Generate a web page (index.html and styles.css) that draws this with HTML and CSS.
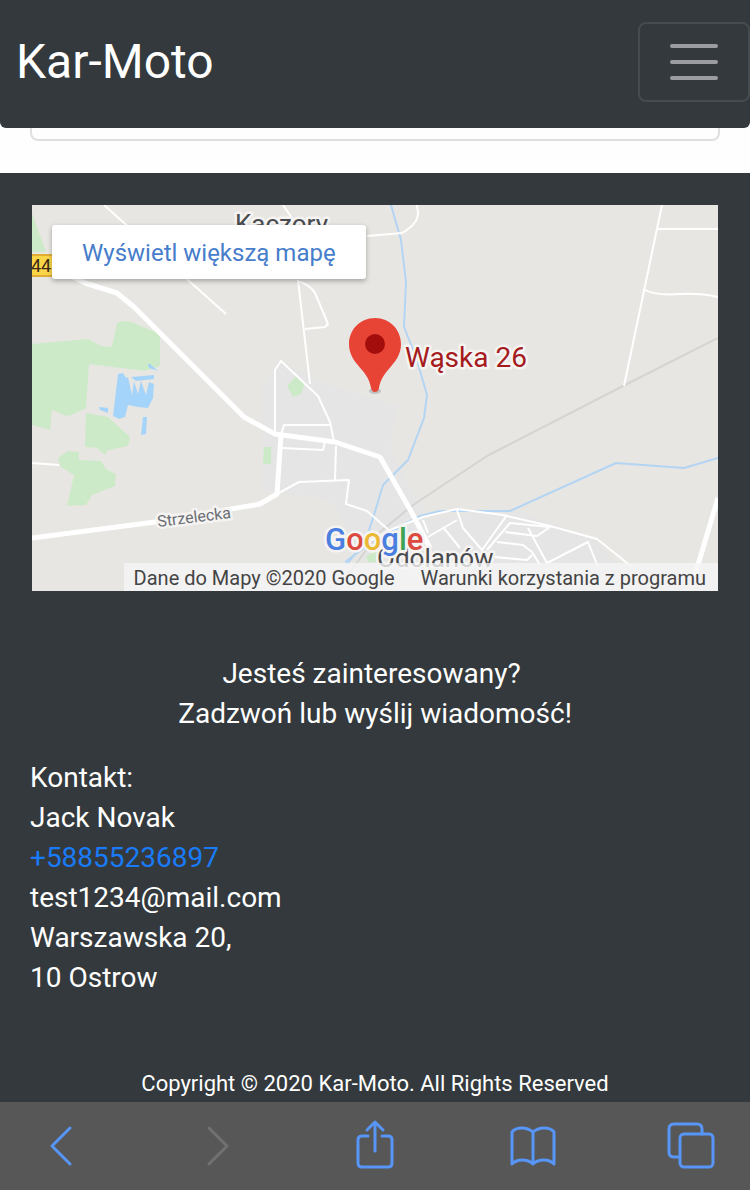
FILE: index.html
```html
<!DOCTYPE html>
<html lang="pl">
<head>
<meta charset="utf-8">
<meta name="viewport" content="width=device-width, initial-scale=1">
<title>Kar-Moto</title>
<link rel="stylesheet" href="styles.css">
</head>
<body>
<header class="navbar">
  <a class="brand" href="#">Kar-Moto</a>
  <button class="toggler" type="button" aria-label="Menu">
    <svg class="toggler-icon" viewBox="0 0 60 60" fill="none" stroke-width="4" stroke-linecap="round" aria-hidden="true"><path d="M8 14H52M8 30H52M8 46H52"/></svg>
  </button>
</header>
<main class="content">
  <div class="card"></div>
</main>
<footer class="footer">
  <section class="map" aria-label="Mapa">
    <svg class="map-canvas" viewBox="32 205 686 386" preserveAspectRatio="xMidYMid slice" aria-hidden="true">
      <rect class="land" x="32" y="205" width="686" height="386"/>
      <path class="town" d="M262 385L281 361L330 385L398 405L390 450L430 520L480 512L515 510L595 538L635 591H380L330 500L262 490Z"/>
      <g class="park">
        <path d="M32 213L46 252H32Z"/>
        <path d="M32 344L88 339L101 346L112 347L117 323Q124 319 134 323L160 334V366L145 371L89 364L86 408L71 415L66 416L52 410L50 430L32 425Z"/>
        <path d="M86 413L108 417L130 437L128 446L108 450L105 455L97 448L85 447Z"/>
        <path d="M58 458L68 451L79 452L79 460L101 461L106 469L116 474L115 486L92 495L86 505L67 506L74 475L61 467Z"/>
        <path d="M287 386L296 376L305 383L301 394L293 397Z"/>
        <path d="M264 447H271V464H263Z"/>
        <path d="M366 556L378 550L376 562H368Z"/>
      </g>
      <g class="lake">
        <path d="M118 374L123 373L126 378L128 377L132 395L134 381L138 394L141 381L146 395L149 382L154 384L153 398L148 408L138 407L128 405L125 417L119 419L113 416Z"/>
        <path d="M148 364L150 364L158 371L149 368ZM131 377L154 375L154 379L136 381ZM99 407L108 408L108 413L100 410ZM143 417H147L146 434L141 435Z"/>
      </g>
      <g class="water">
        <path d="M391 205L401 240L406 282L404 327L416 357L427 395L424 418L408 460L383 485L374 515L365 542L346 565"/>
        <path d="M345 562L375 540L420 516L440 511L510 511L616 463L684 468L718 458"/>
      </g>
      <path class="railway" d="M718 338L625 385L487 456L413 505L380 532L340 585"/>
      <g class="street">
        <path d="M104 205L226 314M283 205L300 230"/>
        <path d="M367 236L402 233Q418 224 418 213L417 205M298 280L310 384M298 281Q310 285 315 293L328 324L325 327L305 329"/>
        <path d="M275 434L275 370L281 361L318 396L330 422L334 442M281 435L284 425H331M282 448L323 450L325 442M336 446L335 480M277 494L299 482L349 480L346 504L367 511L391 532"/>
        <path d="M662 205L624 386M658 229H718M643 289Q655 296 680 294Q700 293 718 297"/>
        <path d="M32 463L59 465"/>
        <path d="M365 544L390 530L423 517L457 509L503 515L550 526L597 539L632 567"/>
        <path d="M423 520L428 533M428 537L457 520M443 527L460 548M457 510L463 528L482 550L507 515M487 550L510 523L550 527L537 536L505 532M497 542L523 545L532 552L540 565M495 557L527 560L532 555M528 528L547 563L588 542L598 567"/>
      </g>
      <g class="road">
        <path d="M52 266L85 283L117 293L134 307L244 417L275 434L335 442L380 457L412 513L430 548"/>
        <path d="M32 538L155 522L260 504L277 494L281 435M718 498L695 575"/>
      </g>
      <g class="shield"><path d="M32 254H54V277H32Z"/><path class="shield-line" d="M32 255H54M32 276H54"/></g>
      <text class="road-number" x="31" y="272">44</text>
      <text class="label label-town" x="235" y="233">Kaczory</text>
      <text class="label label-town" x="377" y="567">Odolanów</text>
      <text class="label label-street" transform="translate(158 527) rotate(-7)">Strzelecka</text>
      <ellipse class="pin-shadow" cx="375" cy="391" rx="6" ry="3"/>
      <path class="pin" d="M375 318C360 318 349 330 349 344C349 355 355 362 362 370C368 377 370 382 371 388Q372 392 375 392Q378 392 379 388C380 382 382 377 388 370C395 362 401 355 401 344C401 330 390 318 375 318Z"/>
      <circle class="pin-dot" cx="375" cy="344" r="10"/>
      <text class="label label-pin" x="405" y="367">Wąska 26</text>
      <text class="label logo" x="325" y="550"><tspan class="g-blue">G</tspan><tspan class="g-red">o</tspan><tspan class="g-yellow">o</tspan><tspan class="g-blue">g</tspan><tspan class="g-green">l</tspan><tspan class="g-red">e</tspan></text>
    </svg>
    <a class="map-link" href="#">Wyświetl większą mapę</a>
    <div class="map-legal">
      <span>Dane do Mapy ©2020 Google</span>
      <a href="#">Warunki korzystania z programu</a>
    </div>
  </section>
  <p class="lead">Jesteś zainteresowany?&nbsp;<br>Zadzwoń lub wyślij wiadomość!</p>
  <address class="contact">
    Kontakt:<br>Jack Novak<br><a class="phone" href="tel:+58855236897">+58855236897</a><br>test1234@mail.com<br>Warszawska 20,<br>10 Ostrow
  </address>
  <p class="copyright">Copyright © 2020 Kar-Moto. All Rights Reserved</p>
</footer>
<nav class="toolbar" aria-label="Przeglądarka">
  <button class="tool" type="button" aria-label="Wstecz"><svg viewBox="0 0 48 56" aria-hidden="true"><path d="M35 10L17 28L35 46"/></svg></button>
  <button class="tool" type="button" aria-label="Dalej" disabled><svg viewBox="0 0 48 56" aria-hidden="true"><path d="M16 10L34 28L16 46"/></svg></button>
  <button class="tool" type="button" aria-label="Udostępnij"><svg viewBox="0 0 48 56" aria-hidden="true"><path d="M17 18H11Q7 18 7 22V45Q7 49 11 49H37Q41 49 41 45V22Q41 18 37 18H31M24 33V5M16 12L24 4L32 12"/></svg></button>
  <button class="tool" type="button" aria-label="Zakładki"><svg viewBox="0 0 48 56" aria-hidden="true"><path d="M24 14Q19 10 13 10Q6 10 3 14V46Q7 42 13 42Q20 42 24 46Q28 42 35 42Q41 42 45 46V14Q42 10 35 10Q29 10 24 14V45"/></svg></button>
  <button class="tool" type="button" aria-label="Karty"><svg viewBox="0 0 48 56" aria-hidden="true"><path d="M12 39H7Q2 39 2 34V11Q2 6 7 6H30Q35 6 35 11V16"/><rect x="13" y="16" width="33" height="33" rx="4"/></svg></button>
</nav>
</body>
</html>
```

FILE: styles.css
```css
* { box-sizing: border-box; }

body {
  margin: 0;
  min-height: 100vh;
  display: flex;
  flex-direction: column;
  background: #fefefe;
  color: #fff;
  font-family: Roboto, sans-serif;
  font-size: 28px;
  line-height: 40px;
}

a { color: inherit; text-decoration: none; }
button { padding: 0; border: 0; background: none; font: inherit; }
p { margin: 0; }

.navbar {
  display: flex;
  align-items: center;
  justify-content: space-between;
  padding: 22px 0 26px 16px;
  background: #33393c;
  border-radius: 0 0 6px 6px;
}

.brand { font-size: 48px; line-height: 72px; }

.toggler {
  display: flex;
  padding: 8px 24px;
  border: 2px solid #454b4e;
  border-radius: 8px;
}

.toggler-icon { width: 60px; height: 60px; stroke: #9b9da1; }

.content { padding: 0 30px 32px; }

.card {
  height: 13px;
  border: 2px solid #dfdfdf;
  border-top: 0;
  border-radius: 0 0 8px 8px;
}

.footer {
  flex: 1;
  padding: 32px 30px 0;
  background: #33393c;
}

.map {
  position: relative;
  margin: 0 2px 63px;
  overflow: hidden;
}

.map-canvas { display: block; width: 100%; font-family: Roboto, sans-serif; }

.land { fill: #e8e6e3; }
.town { fill: #e6e5e5; }
.park { fill: #cdeac8; }
.lake { fill: #a5d4fa; }
.water, .street, .road, .railway, .shield-line { fill: none; stroke-linejoin: round; }
.water { stroke: #b3d5f3; stroke-width: 2; }
.railway { stroke: #d5d4d2; stroke-width: 2; }
.street { stroke: #fff; stroke-width: 2; }
.road { stroke: #fff; stroke-width: 5; }
.shield { fill: #fbd548; }
.shield-line { stroke: #dfae33; stroke-width: 2; }
.road-number { font-size: 18px; fill: #3a2a16; }

.label { paint-order: stroke; stroke: #f5f4f2; stroke-width: 5; stroke-linejoin: round; }
.label-town { font-size: 26px; fill: #4a4b4f; }
.label-street { font-size: 16px; fill: #6c6e74; }
.label-pin { font-size: 28px; fill: #a51b1d; }
.logo { font-size: 31px; font-weight: 500; }
.g-blue { fill: #4a7fe0; }
.g-red { fill: #dc4b40; }
.g-yellow { fill: #ecb934; }
.g-green { fill: #3fa355; }

.pin-shadow { fill: #bfc0c0; }
.pin { fill: #e84436; }
.pin-dot { fill: #a30e0d; }

.map-link {
  position: absolute;
  top: 20px;
  left: 20px;
  padding: 8px 30px 6px;
  border-radius: 3px;
  background: #fff;
  box-shadow: 0 2px 5px rgba(0, 0, 0, 0.3);
  color: #477dcb;
  font-size: 24px;
}

.map-legal {
  position: absolute;
  right: 0;
  bottom: 0;
  display: flex;
  gap: 26px;
  padding: 2px 12px 0 10px;
  background: rgba(245, 245, 245, 0.8);
  color: #444;
  font-size: 20px;
  line-height: 26px;
  white-space: nowrap;
}

.lead { margin-bottom: 24px; text-align: center; }
.contact { margin-bottom: 72px; font-style: normal; }
.phone { color: #1a7bf8; }
.copyright { padding-bottom: 4px; font-size: 22px; line-height: 28px; text-align: center; }

.toolbar {
  display: flex;
  align-items: center;
  justify-content: space-between;
  height: 88px;
  padding: 0 35px;
  background: #575757;
}

.tool {
  display: flex;
  color: #5795f7;
}

.tool:disabled { color: #717171; }

.tool svg {
  width: 48px;
  height: 56px;
  fill: none;
  stroke: currentColor;
  stroke-width: 3;
  stroke-linecap: round;
  stroke-linejoin: round;
}
```
